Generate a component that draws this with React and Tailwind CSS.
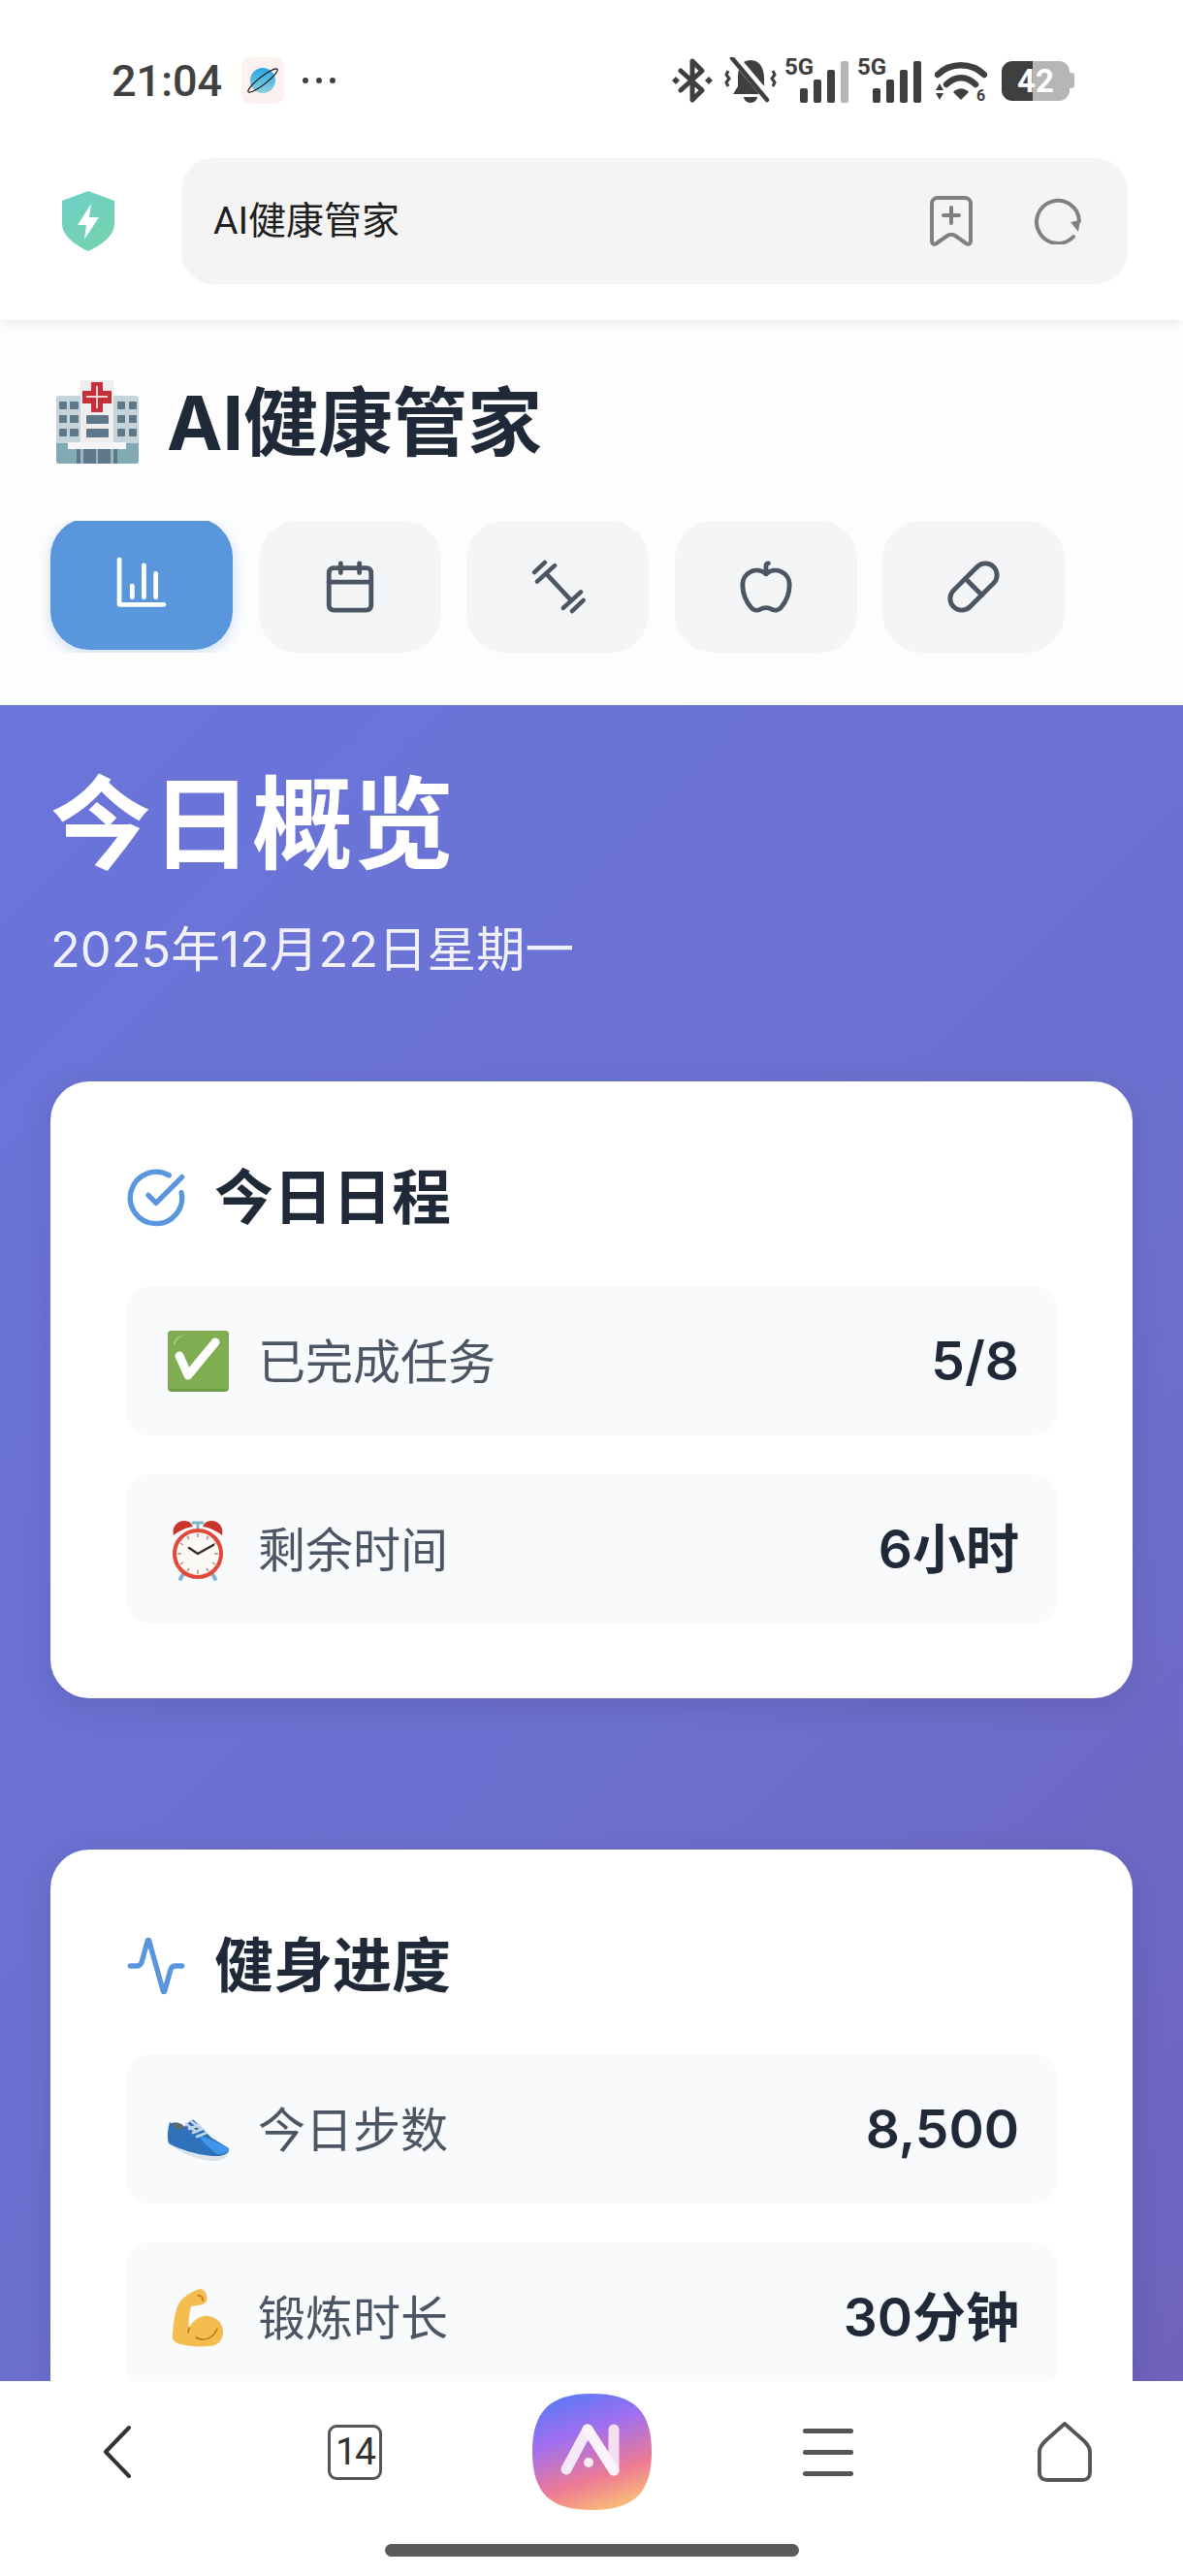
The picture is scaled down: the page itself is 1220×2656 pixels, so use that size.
import React from 'react';
import { Calendar, Apple, Pill, CircleCheckBig, Activity } from 'lucide-react';

const HospitalEmoji = () => (
  <svg viewBox="0 0 96 96" className="w-[96px] h-[96px] shrink-0">
    <rect x="6" y="20" width="85" height="70" rx="3" fill="#c5d3da" />
    <path d="M6 69h85v18a3 3 0 0 1-3 3H9a3 3 0 0 1-3-3Z" fill="#82aab5" />
    <rect x="31" y="4" width="34" height="66" fill="#eeeeee" />
    <path d="M42 6h12v9h9v13h-9v9H42v-9h-9V15h9Z" fill="#c62f3a" />
    <path d="M47 10h2v10h10v2H49v11h-2V22H37v-2h10Z" fill="#f4d5d5" />
    {[26, 40, 54].map((y) => (
      <g key={y} fill="#5f7889">
        <rect x="9" y={y} width="8" height="8" rx="1" />
        <rect x="20" y={y} width="9" height="8" rx="1" />
        <rect x="69" y={y} width="8" height="8" rx="1" />
        <rect x="81" y={y} width="8" height="8" rx="1" />
      </g>
    ))}
    <rect x="37" y="40" width="23" height="9" rx="1" fill="#5f7889" />
    <rect x="37" y="54" width="23" height="9" rx="1" fill="#5f7889" />
    <rect x="27" y="75" width="42" height="15" fill="#5f7889" />
    <rect x="31" y="75" width="3" height="15" fill="#9ab6bf" />
    <rect x="47" y="75" width="2" height="15" fill="#9ab6bf" />
    <rect x="62" y="75" width="3" height="15" fill="#9ab6bf" />
    <rect x="18" y="68" width="60" height="7" fill="#f5f5f5" />
  </svg>
);

const CheckEmoji = () => (
  <svg viewBox="0 0 68 68" className="w-[68px] h-[68px]">
    <rect x="3" y="3" width="63" height="63" rx="4" fill="#6f9f48" />
    <rect x="3" y="3" width="63" height="60" rx="4" fill="#7fae52" />
    <path d="M9 16C11 10 15 8 22 7C15 9 12 12 10 18Z" fill="#a9cd8c" />
    <path d="M15 29L24 49L52 15" fill="none" stroke="#fff" strokeWidth="9" strokeLinecap="round" strokeLinejoin="round" />
  </svg>
);

const ClockEmoji = () => (
  <svg viewBox="0 0 68 68" className="w-[68px] h-[68px]">
    <path d="M20 58l-4 7M48 58l4 7" stroke="#7fb2cc" strokeWidth="4" strokeLinecap="round" />
    <path d="M34 13V8M29 7h10" stroke="#7fb2cc" strokeWidth="3" strokeLinecap="round" />
    <path d="M9 20C7 12 12 5 20 5C26 5 28 9 29 11C21 12 14 16 9 20Z" fill="#c9342c" />
    <path d="M59 20C61 12 56 5 48 5C42 5 40 9 39 11C47 12 54 16 59 20Z" fill="#c9342c" />
    <circle cx="34" cy="39" r="24" fill="#fbf9f6" stroke="#e0493a" strokeWidth="4" />
    <path d="M34 18v4M34 56v4M13 39h4M51 39h4M23 21l2 3M45 21l-2 3M16 28l3 2M52 28l-3 2M16 50l3-2M52 50l-3-2M23 57l2-3M45 57l-2-3" stroke="#b98a80" strokeWidth="1.5" />
    <path d="M25 33l9 6l16-9" fill="none" stroke="#3a2a28" strokeWidth="2.5" strokeLinecap="round" strokeLinejoin="round" />
  </svg>
);

const ShoeEmoji = () => (
  <svg viewBox="0 0 68 68" className="w-[68px] h-[68px]">
    <path d="M3 47C10 56 30 66 50 67C58 67 65 65 66 57L58 58C40 58 20 52 4 44Z" fill="#dde3e9" />
    <path d="M5 27C3 34 2 42 4 49C14 55 40 63 56 62C63 61 67 58 66 54C60 50 54 47 48 43L38 33L30 25C28 24 26 25 24 28L20 32C14 32 9 30 5 27Z" fill="#2e72bb" />
    <path d="M33 38C42 44 56 48 66 54C66 58 60 60 54 60C46 54 38 47 33 38Z" fill="#3f96ea" />
    <path d="M7 28C12 26 18 28 21 33C15 37 9 34 7 28Z" fill="#5b6973" />
    <path d="M22 29l9 7M27 26l9 7M25 34l10-4M29 38l10-4M33 42l10-4" stroke="#c7d6e4" strokeWidth="2.6" strokeLinecap="round" />
  </svg>
);

const MuscleEmoji = () => (
  <svg viewBox="0 0 68 68" className="w-[68px] h-[68px]">
    <path d="M37 5C42 6 45 13 43 18C40 22 33 22 27 23C25 32 24 40 25 45C30 36 38 32 45 33C54 34 61 42 60 51C59 60 53 64 45 64C34 65 22 64 13 61C9 59 7 56 8 52C9 40 10 28 15 19C20 12 30 6 37 5Z" fill="#f4bd50" />
    <path d="M34 12C37 11 40 14 39 17M25 45L24 50M32 55C40 60 50 56 54 46" fill="none" stroke="#b9791f" strokeWidth="1.6" strokeLinecap="round" />
  </svg>
);

const ChartIcon = () => (
  <svg viewBox="0 0 24 24" className="w-16 h-16" fill="none" stroke="#fff" strokeWidth="1.8" strokeLinecap="round" strokeLinejoin="round">
    <path d="M3.4 2.6V20h17.2M8.4 12.8v4.4M12.9 4.8v12.4M17.5 8v9.2" />
  </svg>
);

const DumbbellIcon = () => (
  <svg viewBox="0 0 24 24" className="w-16 h-16" fill="none" stroke="#4b5563" strokeWidth="1.7" strokeLinecap="round">
    <path d="M7.5 6.8L17 17M4.1 10L10.9 3.8M3 6.4L7.1 2.6M14.2 20.2L21 14M17.6 21.4L22 17.2" />
  </svg>
);

const SignalIcon = ({ last }) => (
  <svg viewBox="0 0 68 46" className="w-[68px] h-[46px] overflow-visible">
    <text x="1" y="17" fontFamily="Roboto" fontWeight="700" fontSize="24" fill="#3f3f3f">5G</text>
    <rect x="17" y="31" width="8" height="15" rx="2" fill="#3f3f3f" />
    <rect x="31" y="22" width="8" height="24" rx="2" fill="#3f3f3f" />
    <rect x="45" y="12" width="8" height="34" rx="2" fill="#3f3f3f" />
    <rect x="59" y="3" width="8" height="43" rx="2" fill={last} />
  </svg>
);

const StatusBar = () => (
  <div className="h-[163px] pt-[52px] pl-[115px] pr-[112px] flex items-start justify-between">
    <div className="flex items-center h-[62px]">
      <span className="font-['Roboto',sans-serif] font-medium text-[45px] leading-none text-[#404040]">21:04</span>
      <svg viewBox="0 0 44 48" className="ml-[20px] w-[44px] h-[48px]">
        <rect width="44" height="48" rx="9" fill="#fbf1ee" />
        <defs>
          <linearGradient id="planet" x1="0" y1="0" x2="0" y2="1">
            <stop offset="0" stopColor="#28a7e6" />
            <stop offset="1" stopColor="#8fd0dc" />
          </linearGradient>
        </defs>
        <circle cx="22" cy="24" r="13" fill="url(#planet)" />
        <ellipse cx="22" cy="24" rx="19" ry="4" transform="rotate(-38 22 24)" fill="none" stroke="#111" strokeWidth="1.2" />
      </svg>
      <div className="ml-[19px] flex gap-[8px]">
        <span className="w-[6px] h-[6px] rounded-full bg-[#404040]" />
        <span className="w-[6px] h-[6px] rounded-full bg-[#404040]" />
        <span className="w-[6px] h-[6px] rounded-full bg-[#404040]" />
      </div>
    </div>
    <div className="flex items-center h-[62px]">
      {/* bluetooth */}
      <svg viewBox="0 0 42 46" className="w-[42px] h-[46px]" fill="none" stroke="#3f3f3f" strokeWidth="5" strokeLinecap="round" strokeLinejoin="round">
        <path d="M9 13L31 33L21 43V3L31 13L9 33" />
        <path d="M0 23l4-4l4 4l-4 4ZM34 23l4-4l4 4l-4 4Z" fill="#3f3f3f" stroke="none" />
      </svg>
      {/* silent */}
      <svg viewBox="0 0 54 48" className="ml-[12px] w-[54px] h-[48px]">
        <path d="M27 3C37 3 41 12 41 22V30L46 38H9L14 30V20C14 11 18 3 27 3Z" fill="#3f3f3f" />
        <path d="M20 41h14a7 6 0 0 1-14 0Z" fill="#3f3f3f" />
        <path d="M10 0L47 44" stroke="#fff" strokeWidth="9" />
        <path d="M8 1L44 44" stroke="#3f3f3f" strokeWidth="4.5" strokeLinecap="round" />
        <path d="M4 14l-2 4l3 4l-3 4l2 4M50 14l2 4l-3 4l3 4l-2 4" fill="none" stroke="#3f3f3f" strokeWidth="3" />
      </svg>
      <div className="ml-[7px]"><SignalIcon last="#b6b6b6" /></div>
      <div className="ml-[7px]"><SignalIcon last="#3f3f3f" /></div>
      {/* wifi */}
      <svg viewBox="0 0 54 42" className="ml-[13px] w-[54px] h-[42px]">
        <path d="M3 15C16 2 38 2 51 15M12 25C21 16 33 16 42 25" fill="none" stroke="#3f3f3f" strokeWidth="6.5" strokeLinecap="round" />
        <path d="M19 33C24 28 30 28 35 33L27 41Z" fill="#3f3f3f" />
        <path d="M5 24l-4 7h8ZM5 41l-4-7h8Z" fill="#3f3f3f" />
        <text x="43" y="42" fontFamily="Roboto" fontWeight="700" fontSize="16" fill="#3f3f3f">6</text>
      </svg>
      {/* battery */}
      <div className="relative ml-[15px] w-[75px] h-[41px] flex">
        <div className="w-[32px] h-full bg-[#3f3f3f] rounded-l-[11px]" />
        <div className="w-[38px] h-full bg-[#b6b6b6] rounded-r-[11px]" />
        <div className="w-[5px] h-[16px] self-center bg-[#b6b6b6] rounded-r-[3px]" />
        <span className="absolute left-[15px] top-0 w-[40px] text-center font-['Roboto',sans-serif] font-bold text-[33px] leading-[41px] text-white">42</span>
      </div>
    </div>
  </div>
);

const BrowserBar = () => (
  <div className="relative z-10 h-[167px] bg-white flex items-start shadow-[0_7px_8px_-3px_rgba(0,0,0,0.07)]">
    <div className="w-[187px] h-[130px] flex items-center justify-center pr-[6px]">
      <svg viewBox="0 0 54 62" className="w-[54px] h-[62px]">
        <defs>
          <linearGradient id="shield" x1="0" y1="0" x2="0.6" y2="1">
            <stop offset="0" stopColor="#6fcfc9" />
            <stop offset="1" stopColor="#74d3ae" />
          </linearGradient>
        </defs>
        <path d="M27 0L54 10V34C54 47 38 57 27 62C16 57 0 47 0 34V10Z" fill="url(#shield)" />
        <path d="M30 13L16 35H25L23 50L38 27H28Z" fill="#fff" />
      </svg>
    </div>
    <div className="flex-1 mr-[57px] h-[130px] rounded-[34px] bg-[#f4f4f4] flex items-center pl-[33px] pr-[48px]">
      <span className="flex-1 font-['Roboto','Noto_Sans_CJK_SC',sans-serif] text-[39px] leading-none text-[#1f1f1f]">AI健康管家</span>
      <svg viewBox="0 0 44 52" className="w-[44px] h-[52px]" fill="none" stroke="#808080" strokeWidth="4" strokeLinecap="round" strokeLinejoin="round">
        <path d="M8 2H36A6 6 0 0 1 42 8V46C42 50 39 51 36 48L26 41C23 39 21 39 18 41L8 48C5 51 2 50 2 46V8A6 6 0 0 1 8 2Z" />
        <path d="M22 12V28M14 20H30" />
      </svg>
      <svg viewBox="0 0 48 48" className="ml-[64px] w-[48px] h-[48px]" fill="none" stroke="#808080" strokeWidth="4" strokeLinecap="round">
        <path d="M40 40A22 22 0 1 1 46 24" />
        <path d="M37 25L47 23L45 35Z" fill="#808080" stroke="none" />
      </svg>
    </div>
  </div>
);

const Tab = ({ active, children }) => (
  <div
    className={
      active
        ? 'w-[188px] h-[136px] shrink-0 rounded-[40px] bg-[#5a96db] flex items-center justify-center -translate-y-[3px] shadow-[0_4px_14px_rgba(90,150,219,0.3)]'
        : 'w-[188px] h-[136px] shrink-0 rounded-[40px] bg-[#f3f5f7] flex items-center justify-center'
    }
  >
    {children}
  </div>
);

const Header = () => (
  <header className="h-[397px] bg-[#fdfdfe] pt-[58px] px-[52px]">
    <div className="h-[96px] flex items-center">
      <HospitalEmoji />
      <h1 className="ml-[24px] text-[77px] leading-none font-bold text-[#1f2937]">AI健康管家</h1>
    </div>
    <div className="mt-[53px] flex gap-[26.5px] overflow-hidden -mx-[10px] px-[10px] h-[136px]">
      <Tab active><ChartIcon /></Tab>
      <Tab><Calendar className="w-[58px] h-[58px] text-[#4b5563]" /></Tab>
      <Tab><DumbbellIcon /></Tab>
      <Tab><Apple className="w-[58px] h-[58px] text-[#4b5563]" /></Tab>
      <Tab><Pill className="w-[58px] h-[58px] text-[#4b5563]" /></Tab>
    </div>
  </header>
);

const StatRow = ({ emoji, label, value }) => (
  <div className="h-[154px] rounded-[24px] bg-[#f8fafc] pl-[40px] pr-[39px] flex items-center">
    {emoji}
    <span className="ml-[28px] pt-[2px] flex-1 text-[49px] leading-none text-[#4b5563]">{label}</span>
    <span className="text-[55px] leading-none font-semibold text-[#1f2937]">{value}</span>
  </div>
);

const Card = ({ icon, title, children }) => (
  <section className="rounded-[40px] bg-white p-[78px] pb-[77px] pt-[78px] shadow-[0_8px_32px_rgba(0,0,0,0.1)]">
    <div className="h-[84px] mb-[49px] flex items-center">
      {icon}
      <h2 className="ml-[28px] text-[61px] leading-none font-semibold text-[#1f2937]">{title}</h2>
    </div>
    <div className="flex flex-col gap-[40px]">{children}</div>
  </section>
);

const BottomNav = () => (
  <nav className="h-[201px] bg-white relative z-10">
    <div className="h-[146px] grid grid-cols-5 items-center justify-items-center">
      <svg viewBox="0 0 32 56" className="w-[32px] h-[56px] -ml-[3px]" fill="none" stroke="#333" strokeWidth="4" strokeLinecap="round" strokeLinejoin="round">
        <path d="M28 3L4 28L28 53" />
      </svg>
      <div className="w-[56px] h-[57px] rounded-[9px] border-[3.5px] border-[#555] flex items-center justify-center">
        <span className="font-['Roboto',sans-serif] text-[39px] leading-none tracking-[-2px] text-[#333]">14</span>
      </div>
      <svg viewBox="0 0 123 120" className="w-[123px] h-[120px]">
        <defs>
          <linearGradient id="logo" x1="0.3" y1="0" x2="0.65" y2="1">
            <stop offset="0" stopColor="#5f78f5" />
            <stop offset="0.33" stopColor="#a06ff0" />
            <stop offset="0.72" stopColor="#ee7a94" />
            <stop offset="1" stopColor="#f8bd78" />
          </linearGradient>
        </defs>
        <path d="M61.5 0C105 0 123 18 123 60C123 102 105 120 61.5 120C18 120 0 102 0 60C0 18 18 0 61.5 0Z" fill="url(#logo)" />
        <path d="M57 37L35 78" stroke="#f6e9f7" strokeWidth="11" strokeLinecap="round" />
        <path d="M84 37V79" stroke="#f3dff0" strokeWidth="11" strokeLinecap="round" />
        <path d="M57 37L84 79" stroke="#fbf3fa" strokeWidth="11" strokeLinecap="round" />
        <circle cx="58" cy="71" r="5" fill="#f9ecf6" />
      </svg>
      <div className="flex flex-col gap-[17px]">
        <span className="w-[52px] h-[5px] rounded-full bg-[#555]" />
        <span className="w-[52px] h-[5px] rounded-full bg-[#555]" />
        <span className="w-[52px] h-[5px] rounded-full bg-[#555]" />
      </div>
      <svg viewBox="0 0 58 62" className="w-[56px] h-[62px]" fill="none" stroke="#555" strokeWidth="4" strokeLinejoin="round" preserveAspectRatio="none">
        <path d="M29 2L50 20C54 24 56 27 56 31V52C56 57 53 60 48 60H10C5 60 2 57 2 52V31C2 27 4 24 8 20Z" />
      </svg>
    </div>
    <div className="flex justify-center mt-[22px]">
      <div className="w-[427px] h-[13px] rounded-full bg-[#5a5a5a]" />
    </div>
  </nav>
);

export default function App() {
  return (
    <div className="w-[1220px] h-[2656px] flex flex-col overflow-hidden bg-white font-['Inter','Noto_Sans_CJK_SC',sans-serif]">
      <StatusBar />
      <BrowserBar />
      <Header />
      <main className="flex-1 overflow-hidden px-[52px] bg-[linear-gradient(135deg,#6a75da_0%,#6c6fce_60%,#6f62bc_100%)]">
        <h1 className="mt-[70px] text-[104px] leading-[106px] font-bold text-white">今日概览</h1>
        <p className="mt-[46px] text-[50.5px] leading-[60px] text-white/90">2025年12月22日星期一</p>
        <div className="mt-[106px] flex flex-col gap-[156px]">
          <Card icon={<CircleCheckBig className="w-16 h-16 text-[#5a96db] -ml-[1px]" />} title="今日日程">
            <StatRow emoji={<CheckEmoji />} label="已完成任务" value="5/8" />
            <StatRow emoji={<ClockEmoji />} label="剩余时间" value="6小时" />
          </Card>
          <Card icon={<Activity className="w-16 h-16 text-[#5a96db] -ml-[1px]" />} title="健身进度">
            <StatRow emoji={<ShoeEmoji />} label="今日步数" value="8,500" />
            <StatRow emoji={<MuscleEmoji />} label="锻炼时长" value="30分钟" />
          </Card>
        </div>
      </main>
      <BottomNav />
    </div>
  );
}
